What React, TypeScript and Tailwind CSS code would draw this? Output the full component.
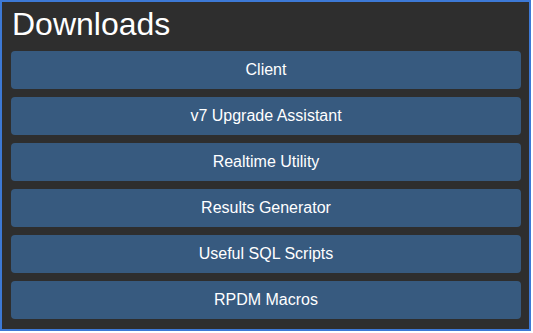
const items = [
  "Client",
  "v7 Upgrade Assistant",
  "Realtime Utility",
  "Results Generator",
  "Useful SQL Scripts",
  "RPDM Macros",
];

export default function App() {
  return (
    <div className="h-[331px] w-[531px] border-2 border-[#3d79d6] bg-[#2e2e2e] pl-[9px] pr-[8px] font-['Liberation_Sans',Arial,sans-serif] text-white">
      <h1 className="h-[49px] pl-[1px] pt-[4px] text-[32px] leading-[37px]">Downloads</h1>
      <div className="flex flex-col gap-2">
        {items.map((label) => (
          <a
            key={label}
            href="#"
            className="flex h-[38px] items-center justify-center rounded-[4px] bg-[#375a7f] text-[16px]"
          >
            {label}
          </a>
        ))}
      </div>
    </div>
  );
}
